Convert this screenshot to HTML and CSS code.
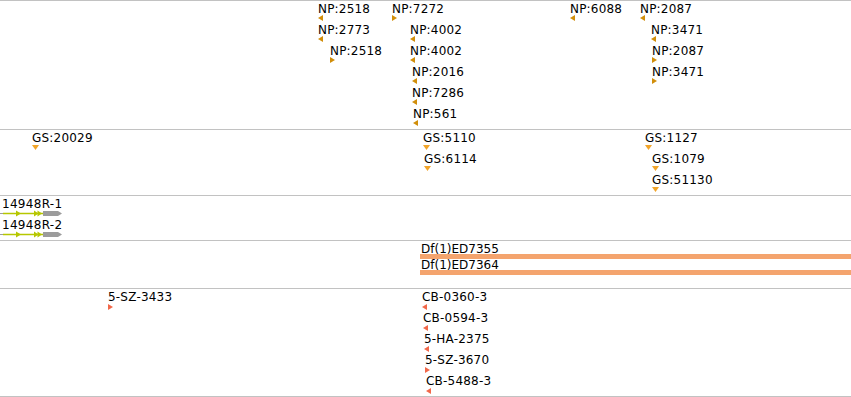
FILE: index.html
```html
<!DOCTYPE html>
<html lang="en">
<head>
    <meta charset="UTF-8">
    <title>Tracks</title>
    <link rel="stylesheet" href="styles.css">
</head>
<body>
    <div class="tracks">
        <!-- NP track -->
        <div class="track np" style="height:128px">
            <div class="feat r0" style="left:318px"><div class="lbl">NP:2518</div><svg class="arrow" viewBox="0 0 6 6"><polygon points="5,0 5,6 0,3"/></svg></div>
            <div class="feat r0" style="left:392px"><div class="lbl">NP:7272</div><svg class="arrow" viewBox="0 0 6 6"><polygon points="0,0 0,6 5,3"/></svg></div>
            <div class="feat r1" style="left:318px"><div class="lbl">NP:2773</div><svg class="arrow" viewBox="0 0 6 6"><polygon points="5,0 5,6 0,3"/></svg></div>
            <div class="feat r2" style="left:330px"><div class="lbl">NP:2518</div><svg class="arrow" viewBox="0 0 6 6"><polygon points="0,0 0,6 5,3"/></svg></div>
            <div class="feat r1" style="left:410px"><div class="lbl">NP:4002</div><svg class="arrow" viewBox="0 0 6 6"><polygon points="5,0 5,6 0,3"/></svg></div>
            <div class="feat r2" style="left:410px"><div class="lbl">NP:4002</div><svg class="arrow" viewBox="0 0 6 6"><polygon points="5,0 5,6 0,3"/></svg></div>
            <div class="feat r3" style="left:412px"><div class="lbl">NP:2016</div><svg class="arrow" viewBox="0 0 6 6"><polygon points="5,0 5,6 0,3"/></svg></div>
            <div class="feat r4" style="left:412px"><div class="lbl">NP:7286</div><svg class="arrow" viewBox="0 0 6 6"><polygon points="5,0 5,6 0,3"/></svg></div>
            <div class="feat r5" style="left:413px"><div class="lbl">NP:561</div><svg class="arrow" viewBox="0 0 6 6"><polygon points="5,0 5,6 0,3"/></svg></div>
            <div class="feat r0" style="left:570px"><div class="lbl">NP:6088</div><svg class="arrow" viewBox="0 0 6 6"><polygon points="5,0 5,6 0,3"/></svg></div>
            <div class="feat r0" style="left:640px"><div class="lbl">NP:2087</div><svg class="arrow" viewBox="0 0 6 6"><polygon points="5,0 5,6 0,3"/></svg></div>
            <div class="feat r1" style="left:651px"><div class="lbl">NP:3471</div><svg class="arrow" viewBox="0 0 6 6"><polygon points="5,0 5,6 0,3"/></svg></div>
            <div class="feat r2" style="left:652px"><div class="lbl">NP:2087</div><svg class="arrow" viewBox="0 0 6 6"><polygon points="0,0 0,6 5,3"/></svg></div>
            <div class="feat r3" style="left:652px"><div class="lbl">NP:3471</div><svg class="arrow" viewBox="0 0 6 6"><polygon points="0,0 0,6 5,3"/></svg></div>
        </div>

        <!-- GS track -->
        <div class="track gs" style="height:65px">
            <div class="feat r0" style="left:32px"><div class="lbl">GS:20029</div><svg class="down" viewBox="0 0 7 5"><polygon points="0,0 7,0 3.5,5"/></svg></div>
            <div class="feat r0" style="left:423px"><div class="lbl">GS:5110</div><svg class="down" viewBox="0 0 7 5"><polygon points="0,0 7,0 3.5,5"/></svg></div>
            <div class="feat r1" style="left:424px"><div class="lbl">GS:6114</div><svg class="down" viewBox="0 0 7 5"><polygon points="0,0 7,0 3.5,5"/></svg></div>
            <div class="feat r0" style="left:645px"><div class="lbl">GS:1127</div><svg class="down" viewBox="0 0 7 5"><polygon points="0,0 7,0 3.5,5"/></svg></div>
            <div class="feat r1" style="left:652px"><div class="lbl">GS:1079</div><svg class="down" viewBox="0 0 7 5"><polygon points="0,0 7,0 3.5,5"/></svg></div>
            <div class="feat r2" style="left:652px"><div class="lbl">GS:51130</div><svg class="down" viewBox="0 0 7 5"><polygon points="0,0 7,0 3.5,5"/></svg></div>
        </div>

        <!-- gene models -->
        <div class="track genes" style="height:44px">
            <div class="feat r0" style="left:0"><div class="lbl">14948R-1</div>
                <svg class="model" viewBox="0 0 64 7">
                    <line class="intron" x1="0" y1="3.5" x2="4" y2="3.5"/>
                    <line class="cds-line" x1="3" y1="3.5" x2="43" y2="3.5"/>
                    <polygon class="cds" points="16,0.5 21,3.5 16,6.5"/>
                    <polygon class="cds" points="34,0.5 38.5,3.5 34,6.5"/>
                    <polygon class="cds" points="37.5,0.5 42,3.5 37.5,6.5"/>
                    <polygon class="utr" points="43,1 51,1 49,3.5 51,6 43,6"/>
                    <polygon class="utr" points="47,1 58,1 62,3.5 58,6 47,6"/>
                </svg>
            </div>
            <div class="feat r1" style="left:0"><div class="lbl">14948R-2</div>
                <svg class="model" viewBox="0 0 64 7">
                    <line class="intron" x1="0" y1="3.5" x2="4" y2="3.5"/>
                    <line class="cds-line" x1="3" y1="3.5" x2="43" y2="3.5"/>
                    <polygon class="cds" points="16,0.5 21,3.5 16,6.5"/>
                    <polygon class="cds" points="34,0.5 38.5,3.5 34,6.5"/>
                    <polygon class="cds" points="37.5,0.5 42,3.5 37.5,6.5"/>
                    <polygon class="utr" points="43,1 51,1 49,3.5 51,6 43,6"/>
                    <polygon class="utr" points="47,1 58,1 62,3.5 58,6 47,6"/>
                </svg>
            </div>
        </div>

        <!-- deficiencies -->
        <div class="track df" style="height:47px">
            <div class="span d0" style="left:420px"><div class="lbl">Df(1)ED7355</div><div class="bar"></div></div>
            <div class="span d1" style="left:420px"><div class="lbl">Df(1)ED7364</div><div class="bar"></div></div>
        </div>

        <!-- insertions -->
        <div class="track ins" style="height:107px">
            <div class="feat r0" style="left:108px"><div class="lbl">5-SZ-3433</div><svg class="arrow" viewBox="0 0 6 6"><polygon points="0,0 0,6 5,3"/></svg></div>
            <div class="feat r0" style="left:422px"><div class="lbl">CB-0360-3</div><svg class="arrow" viewBox="0 0 6 6"><polygon points="5,0 5,6 0,3"/></svg></div>
            <div class="feat r1" style="left:423px"><div class="lbl">CB-0594-3</div><svg class="arrow" viewBox="0 0 6 6"><polygon points="5,0 5,6 0,3"/></svg></div>
            <div class="feat r2" style="left:424px"><div class="lbl">5-HA-2375</div><svg class="arrow" viewBox="0 0 6 6"><polygon points="5,0 5,6 0,3"/></svg></div>
            <div class="feat r3" style="left:425px"><div class="lbl">5-SZ-3670</div><svg class="arrow" viewBox="0 0 6 6"><polygon points="0,0 0,6 5,3"/></svg></div>
            <div class="feat r4" style="left:426px"><div class="lbl">CB-5488-3</div><svg class="arrow" viewBox="0 0 6 6"><polygon points="5,0 5,6 0,3"/></svg></div>
        </div>
    </div>
</body>
</html>
```

FILE: styles.css
```css
:root {
    --rule: #c2c2c2;
    --np: #d18e0a;
    --gs: #f2a52a;
    --ins: #f2684a;
    --df: #f4a46e;
    --cds: #b6c700;
    --utr: #9c9c9c;
}

body {
    margin: 0;
    background: #fff;
    color: #000;
    font-family: "DejaVu Sans", Verdana, sans-serif;
    overflow: hidden;
}

.tracks {
    border-top: 1px solid var(--rule);
}

.track {
    position: relative;
    border-bottom: 1px solid var(--rule);
    overflow: hidden;
}

.feat,
.span {
    position: absolute;
}

.r0 { top: 1px; }
.r1 { top: 22px; }
.r2 { top: 43px; }
.r3 { top: 64px; }
.r4 { top: 85px; }
.r5 { top: 106px; }

.lbl {
    font-size: 12px;
    line-height: 15px;
    letter-spacing: 0.2px;
    white-space: nowrap;
}

.arrow {
    display: block;
    width: 6px;
    height: 6px;
    margin-top: -2px;
}

.down {
    display: block;
    width: 7px;
    height: 5px;
    margin-top: -1px;
}

.np polygon { fill: var(--np); }
.gs polygon { fill: var(--gs); }
.ins polygon { fill: var(--ins); }
.ins .arrow { margin-top: -1px; }

.genes .lbl {
    padding-left: 2px;
    letter-spacing: 0.3px;
}

.model {
    display: block;
    width: 64px;
    height: 7px;
    margin-top: -2px;
}

.model .intron { stroke: var(--utr); stroke-width: 1; }
.model .cds-line { stroke: var(--cds); stroke-width: 1.4; }
.model .cds { fill: var(--cds); }
.model .utr { fill: var(--utr); }

.span {
    right: -20px;
}

.d0 { top: 2px; }
.d1 { top: 18px; }

.span .lbl {
    line-height: 13px;
    letter-spacing: 0;
    padding-left: 1px;
}

.bar {
    height: 5px;
    margin-top: -2px;
    background: var(--df);
}
```
